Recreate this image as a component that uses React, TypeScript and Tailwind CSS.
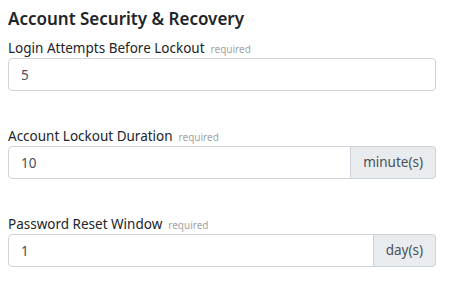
import React from 'react';

interface FieldProps {
  label: string;
  value: string;
  unit?: string;
}

const Field: React.FC<FieldProps> = ({ label, value, unit }) => (
  <div className="mb-[36px]">
    <label className="flex items-baseline gap-[6px] text-[13.5px] leading-[18px] text-[#212529]">
      {label}
      <span className="text-[10px] text-[#a0a4a8]">required</span>
    </label>
    <div className="flex h-[33px] w-full">
      <input
        readOnly
        value={value}
        className={`h-full flex-1 min-w-0 border border-[#ced4da] bg-white px-[12px] text-[13.5px] text-[#495057] outline-none ${
          unit ? 'rounded-l-[4px]' : 'rounded-[4px]'
        }`}
      />
      {unit && (
        <span className="flex h-full items-center rounded-r-[4px] border border-l-0 border-[#ced4da] bg-[#e9ecef] px-[12px] text-[13.5px] text-[#495057]">
          {unit}
        </span>
      )}
    </div>
  </div>
);

export default function App() {
  return (
    <div
      className="w-[449px] h-[289px] overflow-hidden bg-white px-[8px] pt-[7px]"
      style={{ fontFamily: '"Noto Sans", "Open Sans", sans-serif' }}
    >
      <h2 className="mb-[8px] text-[17px] font-semibold leading-[24px] text-[#212529]">
        Account Security &amp; Recovery
      </h2>
      <div className="w-[428px]">
        <Field label="Login Attempts Before Lockout" value="5" />
        <Field label="Account Lockout Duration" value="10" unit="minute(s)" />
        <Field label="Password Reset Window" value="1" unit="day(s)" />
      </div>
    </div>
  );
}
